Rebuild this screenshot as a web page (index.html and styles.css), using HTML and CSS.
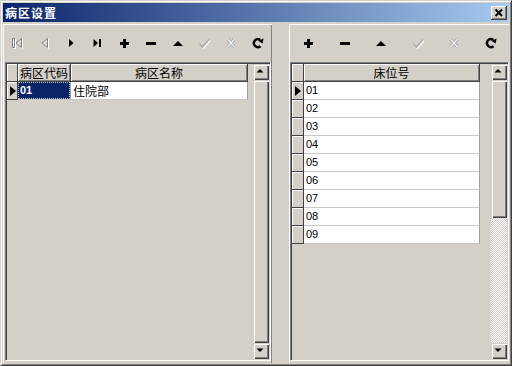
FILE: index.html
```html
<!DOCTYPE html>
<html lang="zh">
<head>
  <meta charset="UTF-8" />
  <title>病区设置</title>
  <link rel="stylesheet" href="styles.css">
</head>
<body>
  <div class="window">
    <div class="titlebar">
      <span class="title">病区设置</span>
      <span class="close">
        <svg width="16" height="14" viewBox="0 0 16 14"><path d="M4.5 3.5 L11 10 M11 3.5 L4.5 10" stroke="#000" stroke-width="2"/></svg>
      </span>
    </div>

    <div class="main">
      <!-- 病区 -->
      <div class="pane pane-left">
        <div class="toolbar">
          <span class="tool">
            <svg width="16" height="16" viewBox="0 0 16 16">
              <g fill="none" stroke="#fff" transform="translate(1,1)"><path d="M3.5 3.5 H5.5 V12.5 H3.5 Z M12.5 3.5 L7 8 L12.5 12.5 Z"/></g>
              <g fill="none" stroke="#808080"><path d="M3.5 3.5 H5.5 V12.5 H3.5 Z M12.5 3.5 L7 8 L12.5 12.5 Z"/></g>
            </svg>
          </span>
          <span class="tool">
            <svg width="16" height="16" viewBox="0 0 16 16">
              <path d="M11.5 3.5 L6 8 L11.5 12.5 Z" fill="none" stroke="#fff" transform="translate(1,1)"/>
              <path d="M11.5 3.5 L6 8 L11.5 12.5 Z" fill="none" stroke="#808080"/>
            </svg>
          </span>
          <span class="tool">
            <svg width="16" height="16" viewBox="0 0 16 16"><path d="M6 4 V12 L10.5 8 Z"/></svg>
          </span>
          <span class="tool">
            <svg width="16" height="16" viewBox="0 0 16 16"><path d="M4.5 4 V12 L9 8 Z"/><rect x="10" y="4" width="2" height="8"/></svg>
          </span>
          <span class="tool">
            <svg width="16" height="16" viewBox="0 0 16 16"><rect x="4" y="7" width="9" height="3"/><rect x="7" y="4" width="3" height="9"/></svg>
          </span>
          <span class="tool">
            <svg width="16" height="16" viewBox="0 0 16 16"><rect x="3" y="7" width="10" height="3"/></svg>
          </span>
          <span class="tool">
            <svg width="16" height="16" viewBox="0 0 16 16"><path d="M3 11 H13 L8 6 Z"/></svg>
          </span>
          <span class="tool">
            <svg width="16" height="16" viewBox="0 0 16 16">
              <path d="M3.5 9 L6.5 12 L13 4.5" fill="none" stroke="#fff" stroke-width="1.6" transform="translate(1,1)"/>
              <path d="M3.5 9 L6.5 12 L13 4.5" fill="none" stroke="#a8a8a8" stroke-width="1.6"/>
            </svg>
          </span>
          <span class="tool">
            <svg width="16" height="16" viewBox="0 0 16 16">
              <path d="M4.5 4 L11.5 12 M11.5 4 L4.5 12" stroke="#a8a8a8" stroke-width="3.2"/>
              <path d="M4.5 4 L11.5 12 M11.5 4 L4.5 12" stroke="#f4f4f4" stroke-width="1.2"/>
            </svg>
          </span>
          <span class="tool">
            <svg width="16" height="16" viewBox="0 0 16 16"><path d="M10.5 11.2 A4 4 0 1 1 10.2 4.8" fill="none" stroke="#000" stroke-width="2.4"/><path d="M8.2 5.8 L13.6 3.4 L12.6 8.6 Z"/></svg>
          </span>
        </div>

        <div class="grid-box">
          <div class="grid">
            <div class="row head">
              <div class="cell ind"></div>
              <div class="cell hd w53">病区代码</div>
              <div class="cell hd w177">病区名称</div>
            </div>
            <div class="row">
              <div class="cell ind"><span class="arrow"></span></div>
              <div class="cell dt w53 sel"><span class="focus">01</span></div>
              <div class="cell dt w177">住院部</div>
            </div>
          </div>
          <div class="vscroll">
            <span class="sbtn"><svg width="14" height="14" viewBox="0 0 14 14"><path d="M3.5 8.5 H10.5 L7 5 Z"/></svg></span>
            <span class="thumb full"></span>
            <span class="sbtn"><svg width="14" height="14" viewBox="0 0 14 14"><path d="M3.5 5.5 H10.5 L7 9 Z"/></svg></span>
          </div>
        </div>
      </div>

      <!-- 床位 -->
      <div class="pane pane-right">
        <div class="toolbar">
          <span class="tool">
            <svg width="16" height="16" viewBox="0 0 16 16"><rect x="4" y="7" width="9" height="3"/><rect x="7" y="4" width="3" height="9"/></svg>
          </span>
          <span class="tool">
            <svg width="16" height="16" viewBox="0 0 16 16"><rect x="3" y="7" width="10" height="3"/></svg>
          </span>
          <span class="tool">
            <svg width="16" height="16" viewBox="0 0 16 16"><path d="M3 11 H13 L8 6 Z"/></svg>
          </span>
          <span class="tool">
            <svg width="16" height="16" viewBox="0 0 16 16">
              <path d="M3.5 9 L6.5 12 L13 4.5" fill="none" stroke="#fff" stroke-width="1.6" transform="translate(1,1)"/>
              <path d="M3.5 9 L6.5 12 L13 4.5" fill="none" stroke="#a8a8a8" stroke-width="1.6"/>
            </svg>
          </span>
          <span class="tool">
            <svg width="16" height="16" viewBox="0 0 16 16">
              <path d="M4.5 4 L11.5 12 M11.5 4 L4.5 12" stroke="#a8a8a8" stroke-width="3.2"/>
              <path d="M4.5 4 L11.5 12 M11.5 4 L4.5 12" stroke="#f4f4f4" stroke-width="1.2"/>
            </svg>
          </span>
          <span class="tool">
            <svg width="16" height="16" viewBox="0 0 16 16"><path d="M10.5 11.2 A4 4 0 1 1 10.2 4.8" fill="none" stroke="#000" stroke-width="2.4"/><path d="M8.2 5.8 L13.6 3.4 L12.6 8.6 Z"/></svg>
          </span>
        </div>

        <div class="grid-box">
          <div class="grid">
            <div class="row head">
              <div class="cell ind w12"></div>
              <div class="cell hd w176">床位号</div>
            </div>
            <div class="row"><div class="cell ind w12"><span class="arrow"></span></div><div class="cell dt w176">01</div></div>
            <div class="row"><div class="cell ind w12"></div><div class="cell dt w176">02</div></div>
            <div class="row"><div class="cell ind w12"></div><div class="cell dt w176">03</div></div>
            <div class="row"><div class="cell ind w12"></div><div class="cell dt w176">04</div></div>
            <div class="row"><div class="cell ind w12"></div><div class="cell dt w176">05</div></div>
            <div class="row"><div class="cell ind w12"></div><div class="cell dt w176">06</div></div>
            <div class="row"><div class="cell ind w12"></div><div class="cell dt w176">07</div></div>
            <div class="row"><div class="cell ind w12"></div><div class="cell dt w176">08</div></div>
            <div class="row"><div class="cell ind w12"></div><div class="cell dt w176">09</div></div>
          </div>
          <div class="vscroll">
            <span class="sbtn"><svg width="14" height="14" viewBox="0 0 14 14"><path d="M3.5 8.5 H10.5 L7 5 Z"/></svg></span>
            <span class="thumb part"></span>
            <span class="track"></span>
            <span class="sbtn"><svg width="14" height="14" viewBox="0 0 14 14"><path d="M3.5 5.5 H10.5 L7 9 Z"/></svg></span>
          </div>
        </div>
      </div>
    </div>
  </div>
</body>
</html>
```

FILE: styles.css
```css
* { margin: 0; padding: 0; box-sizing: border-box; }
body {
  background: #d4d0c8;
  font-family: "Noto Sans CJK SC", "Liberation Sans", sans-serif;
  font-size: 12px;
  color: #000;
}
svg { display: block; }

/* window frame */
.window {
  width: 512px;
  height: 366px;
  background: #d4d0c8;
  border: 1px solid;
  border-color: #d4d0c8 #404040 #404040 #d4d0c8;
  box-shadow: inset 1px 1px #fff, inset -1px -1px #808080;
  padding: 2px;
  display: flex;
  flex-direction: column;
}
.titlebar {
  height: 19px;
  background: linear-gradient(to right, #0a246a, #a6caf0);
  display: flex;
  align-items: center;
  justify-content: space-between;
  padding: 0 2px 0 2px;
}
.title {
  color: #fff;
  font-weight: bold;
  font-size: 12px;
  letter-spacing: 1px;
  line-height: 19px;
}
.close {
  width: 16px;
  height: 14px;
  background: #d4d0c8;
  box-shadow: inset -1px -1px #404040, inset 1px 1px #fff, inset -2px -2px #808080;
}

.main {
  flex: 1;
  display: flex;
  gap: 17px;
  padding-top: 2px;
}
.pane {
  display: flex;
  flex-direction: column;
  box-shadow: inset 1px 1px #fff, inset -1px 0 #808080;
}
.pane-left { width: 269px; }
.pane-right { flex: 1; box-shadow: inset 1px 1px #fff; }

/* toolbar */
.toolbar {
  height: 38px;
  display: flex;
  align-items: center;
  padding: 0 1px 0 1px;
}
.tool {
  flex: 1;
  display: flex;
  justify-content: center;
}
.pane-right .toolbar { padding: 0 0 0 1px; }

/* grid */
.grid-box {
  flex: 1;
  display: flex;
  margin: 0 1px 2px 2px;
  border: 1px solid;
  border-color: #808080 #fff #fff #808080;
  box-shadow: inset 1px 1px #404040, inset -1px -1px #d4d0c8;
  padding: 1px;
}
.pane-right .grid-box { margin: 0 0 2px 1px; }
.grid {
  flex: 1;
  background: #d4d0c8;
}
.row {
  display: flex;
  height: 18px;
}
.cell {
  height: 18px;
  line-height: 17px;
  white-space: nowrap;
  overflow: hidden;
}
.ind {
  width: 11px;
  background: #d4d0c8;
  border-right: 1px solid #404040;
  border-bottom: 1px solid #404040;
  box-shadow: inset 1px 1px #fff;
  position: relative;
}
.w12 { width: 12px; }
.w53 { width: 53px; }
.w176 { width: 176px; }
.w177 { width: 177px; }
.hd {
  text-align: center;
  border-right: 1px solid #404040;
  border-bottom: 1px solid #404040;
  box-shadow: inset 1px 1px #fff, inset -1px -1px #808080;
}
.dt {
  background: #fff;
  border-right: 1px solid #a0a0a0;
  border-bottom: 1px solid #c8c8c8;
  padding-left: 2px;
  font-family: "Liberation Sans", "Noto Sans CJK SC", sans-serif;
  font-size: 11px;
}
.pane-left .dt.w177 { font-family: "Noto Sans CJK SC", sans-serif; font-size: 12px; }
.sel {
  background: #0a246a;
  color: #fff;
  padding: 0;
}
.focus {
  display: block;
  height: 17px;
  padding-left: 1px;
  border: 1px dotted #c0c0c0;
  line-height: 15px;
  font-weight: bold;
}
.arrow {
  position: absolute;
  left: 3px;
  top: 4px;
  border-left: 6px solid #000;
  border-top: 5px solid transparent;
  border-bottom: 5px solid transparent;
}

/* scrollbar */
.vscroll {
  width: 16px;
  display: flex;
  flex-direction: column;
  background: #d4d0c8;
}
.sbtn, .thumb {
  display: block;
  height: 16px;
  background: #d4d0c8;
  box-shadow: inset 1px 1px #d4d0c8, inset 2px 2px #fff, inset -1px -1px #404040, inset -2px -2px #808080;
}
.thumb.full { flex: 1; }
.thumb.part { height: 138px; }
.track {
  flex: 1;
  background: repeating-conic-gradient(#fff 0 25%, #d4d0c8 0 50%) 0 0 / 2px 2px;
}
```
